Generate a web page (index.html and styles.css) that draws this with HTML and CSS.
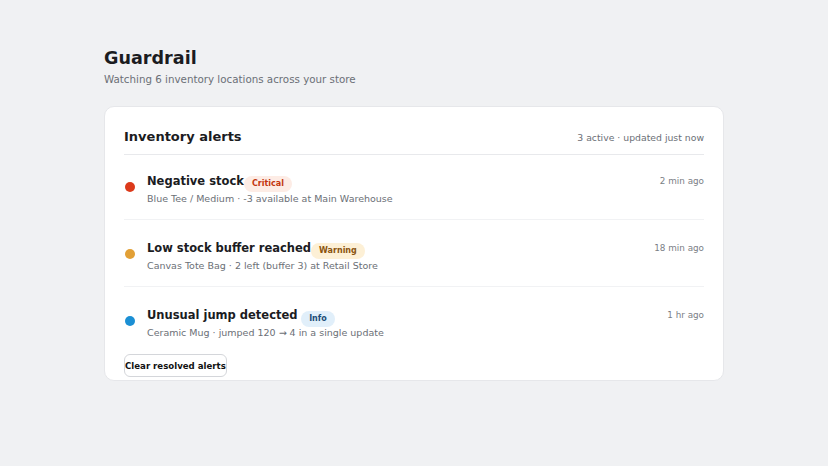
FILE: index.html
```html
<!DOCTYPE html>
<html lang="en">
<head>
<meta charset="utf-8">
<title>Guardrail</title>
<link rel="stylesheet" href="styles.css">
</head>
<body>
<main class="page">
  <header class="page-head">
    <h1 class="page-title">Guardrail</h1>
    <p class="page-sub">Watching 6 inventory locations across your store</p>
  </header>
  <section class="card">
    <div class="card-head">
      <h2 class="card-title">Inventory alerts</h2>
      <span class="card-meta">3 active · updated just now</span>
    </div>
    <ul class="alerts">
      <li class="alert">
        <span class="dot dot-critical"></span>
        <div class="alert-body">
          <div class="alert-title"><span class="alert-name">Negative stock</span><span class="badge badge-critical">Critical</span></div>
          <div class="alert-desc">Blue Tee / Medium · -3 available at Main Warehouse</div>
        </div>
        <span class="alert-time">2 min ago</span>
      </li>
      <li class="alert">
        <span class="dot dot-warning"></span>
        <div class="alert-body">
          <div class="alert-title"><span class="alert-name">Low stock buffer reached</span><span class="badge badge-warning">Warning</span></div>
          <div class="alert-desc">Canvas Tote Bag · 2 left (buffer 3) at Retail Store</div>
        </div>
        <span class="alert-time">18 min ago</span>
      </li>
      <li class="alert">
        <span class="dot dot-info"></span>
        <div class="alert-body">
          <div class="alert-title"><span class="alert-name">Unusual jump detected</span> <span class="badge badge-info">Info</span></div>
          <div class="alert-desc">Ceramic Mug · jumped 120 → 4 in a single update</div>
        </div>
        <span class="alert-time">1 hr ago</span>
      </li>
    </ul>
    <button class="clear-btn" type="button">Clear resolved alerts</button>
  </section>
</main>
</body>
</html>
```
FILE: styles.css
```css
* { box-sizing: border-box; }
html, body { margin: 0; padding: 0; }
body {
  background: #f0f1f3;
  font-family: "DejaVu Sans", sans-serif;
  color: #1b1c1f;
}
.page {
  width: 620px;
  margin: 0 auto;
  padding-top: 47px;
}
.page-title {
  margin: 0;
  font-size: 17.6px;
  line-height: 22px;
  font-weight: 700;
}
.page-sub {
  margin: 3px 0 0;
  font-size: 10.3px;
  line-height: 14px;
  color: #6b6f76;
}
.card {
  margin-top: 20px;
  background: #fff;
  border: 1px solid #e6e7ea;
  border-radius: 10px;
  padding: 22px 19px 3px;
}
.card-head {
  display: flex;
  justify-content: space-between;
  align-items: center;
  padding-bottom: 9px;
  border-bottom: 1px solid #e8e9ec;
}
.card-title {
  margin: 0;
  font-size: 13px;
  line-height: 16px;
  font-weight: 700;
}
.card-meta {
  font-size: 9.3px;
  color: #6b6f76;
}
.alerts {
  list-style: none;
  margin: 0;
  padding: 0;
}
.alert {
  display: flex;
  align-items: flex-start;
  padding: 19px 0 13px;
  border-bottom: 1px solid #f1f2f4;
}
.alert:first-child { padding-top: 17px; }
.alert:last-child { border-bottom: none; }
.dot {
  width: 10px;
  height: 10px;
  border-radius: 50%;
  margin: 10px 12px 0 1px;
  flex: none;
}
.dot-critical { background: #dc3a1b; }
.dot-warning { background: #e2a036; }
.dot-info { background: #1b8fd4; }
.alert-body { flex: 1; }
.alert-title {
  height: 18px;
  font-size: 11.5px;
  line-height: 18px;
  white-space: nowrap;
}
.alert-name { font-weight: 700; }
.badge {
  display: inline-block;
  font-size: 8px;
  font-weight: 700;
  line-height: 12px;
  padding: 2px 8px;
  border-radius: 8px;
  vertical-align: -1px;
}
.badge-critical { background: #fdece5; color: #c3360f; }
.badge-warning { background: #fdf0d6; color: #8a5410; }
.badge-info { background: #e1effa; color: #1c4d78; vertical-align: -2px; }
.alert-desc {
  margin-top: 2px;
  height: 14px;
  font-size: 9.5px;
  line-height: 14px;
  color: #6b6f76;
}
.alert-time {
  margin-top: 3px;
  font-size: 8.8px;
  line-height: 12px;
  color: #7a7e85;
}
.clear-btn {
  display: block;
  margin-top: 1px;
  font-family: "DejaVu Sans", sans-serif;
  font-size: 8.6px;
  font-weight: 700;
  color: #111;
  background: #fff;
  border: 1px solid #d4d6da;
  border-radius: 6px;
  height: 23px;
  padding: 0;
}
```
